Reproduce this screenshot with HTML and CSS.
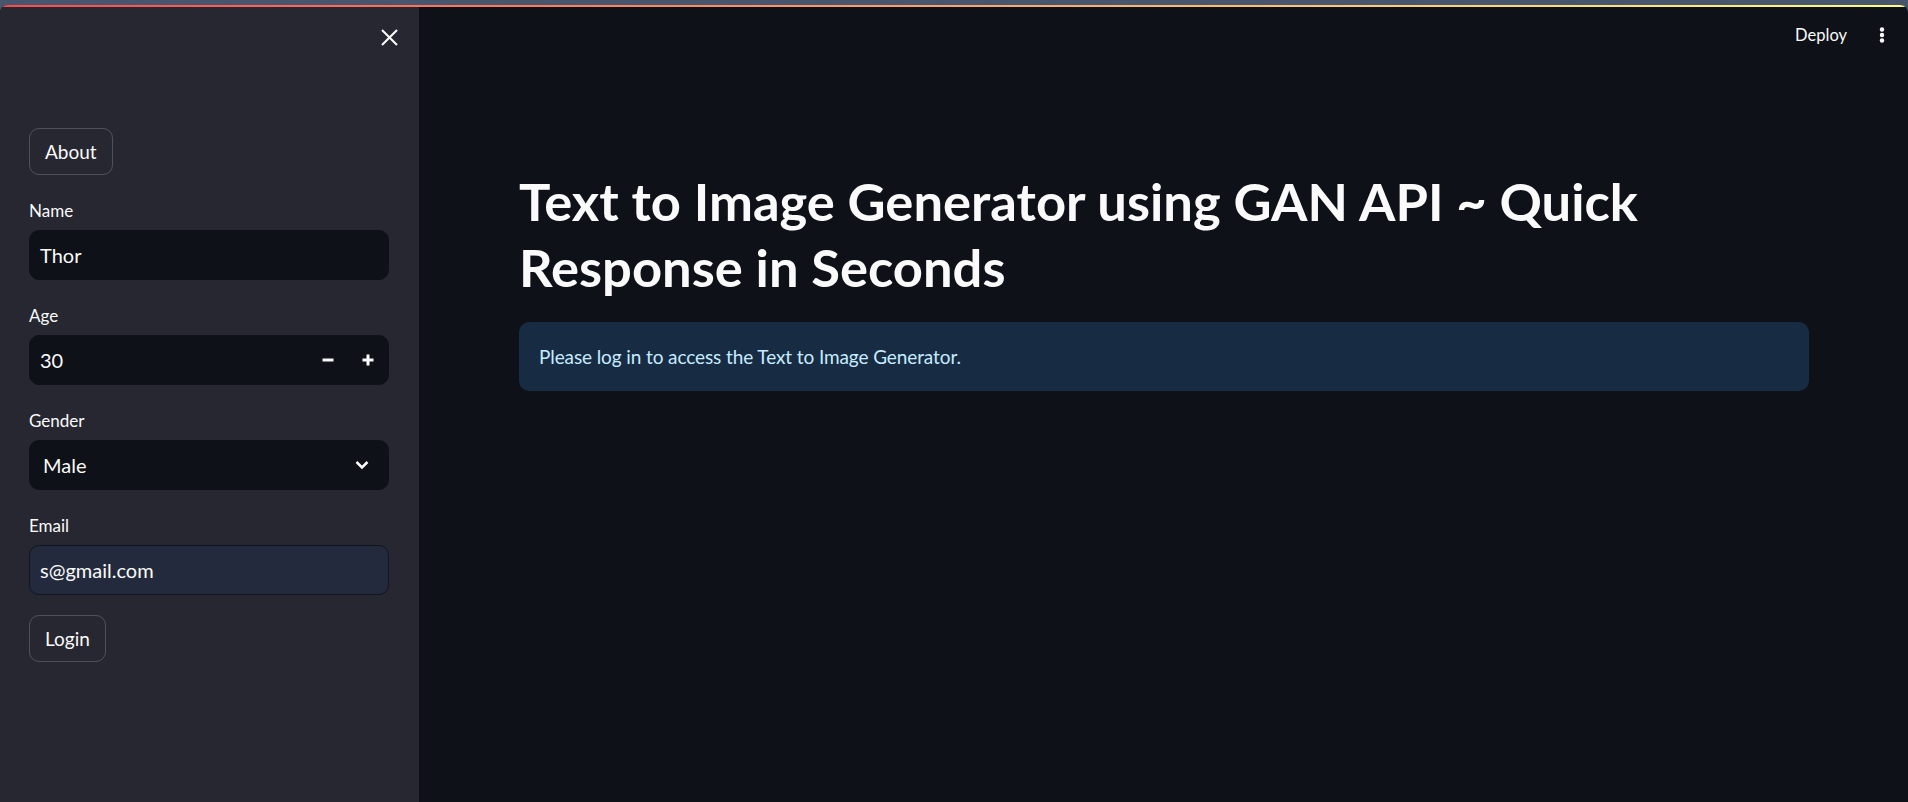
FILE: index.html
```html
<!DOCTYPE html>
<html lang="en">
<head>
<meta charset="utf-8">
<title>Text to Image Generator</title>
<link rel="stylesheet" href="styles.css">
</head>
<body>
<div class="app">
  <div class="decoration"></div>
  <div class="layout">
    <aside class="sidebar">
      <div class="sidebar-header">
        <button class="icon-btn" aria-label="Close sidebar">
          <svg width="25" height="25" viewBox="0 0 24 24"><path d="M5.5 5.5 L18.5 18.5 M18.5 5.5 L5.5 18.5" stroke="#fafafa" stroke-width="2" fill="none" stroke-linecap="square"/></svg>
        </button>
      </div>
      <div class="sidebar-content">
        <button class="btn">About</button>
        <div class="field">
          <div class="label">Name</div>
          <div class="input"><span>Thor</span></div>
        </div>
        <div class="field">
          <div class="label">Age</div>
          <div class="input number">
            <span class="grow">30</span>
            <span class="step"><svg width="12" height="12" viewBox="0 0 12 12"><rect x="0.5" y="4.5" width="11" height="3" fill="#fafafa"/></svg></span>
            <span class="step"><svg width="12" height="12" viewBox="0 0 12 12"><rect x="0.5" y="4.5" width="11" height="3" fill="#fafafa"/><rect x="4.5" y="0.5" width="3" height="11" fill="#fafafa"/></svg></span>
          </div>
        </div>
        <div class="field">
          <div class="label">Gender</div>
          <div class="input select">
            <span class="grow">Male</span>
            <svg width="14" height="10" viewBox="0 0 14 10"><path d="M1.5 2 L7 7.5 L12.5 2" stroke="#fafafa" stroke-width="2.5" fill="none"/></svg>
          </div>
        </div>
        <div class="field">
          <div class="label">Email</div>
          <div class="input filled"><span>s@gmail.com</span></div>
        </div>
        <button class="btn">Login</button>
      </div>
    </aside>
    <main class="main">
      <header class="toolbar">
        <span class="deploy">Deploy</span>
        <button class="icon-btn kebab" aria-label="Main menu">
          <svg width="24" height="24" viewBox="0 0 24 24"><circle cx="12" cy="6.5" r="2.2" fill="#fafafa"/><circle cx="12" cy="12" r="2.2" fill="#fafafa"/><circle cx="12" cy="17.5" r="2.2" fill="#fafafa"/></svg>
        </button>
      </header>
      <section class="content">
        <h1 class="title">Text to Image Generator using GAN API ~ Quick Response in Seconds</h1>
        <div class="info">Please log in to access the Text to Image Generator.</div>
      </section>
    </main>
  </div>
</div>
</body>
</html>
```
FILE: styles.css
```css
html, body {
  margin: 0;
  height: 802px;
  overflow: hidden;
}
body {
  background: #47566e;
  font-family: Lato, "Liberation Sans", sans-serif;
  color: #fafafa;
}
.app {
  margin-top: 5px;
  height: 797px;
  border-radius: 8px 8px 0 0;
  overflow: hidden;
  display: flex;
  flex-direction: column;
  background: #0e1117;
}
.decoration {
  flex: none;
  height: 2px;
  background: linear-gradient(90deg, #ff4b4b, #fffd80);
}
.layout {
  flex: 1;
  display: flex;
}
.sidebar {
  flex: none;
  width: 419px;
  background: #262730;
  display: flex;
  flex-direction: column;
}
.sidebar-header {
  display: flex;
  justify-content: flex-end;
  padding: 18px 17px 0 0;
}
.icon-btn {
  background: none;
  border: 0;
  padding: 0;
  display: flex;
  cursor: pointer;
}
.sidebar-content {
  padding: 78px 30px 0 29px;
  display: flex;
  flex-direction: column;
  align-items: flex-start;
  gap: 20px;
}
.btn {
  height: 47px;
  padding: 0 15px;
  border: 1px solid rgba(250, 250, 250, 0.2);
  border-radius: 10px;
  background: transparent;
  color: #fafafa;
  font-family: inherit;
  font-size: 19px;
}
.field {
  align-self: stretch;
}
.label {
  height: 30px;
  margin-bottom: 5px;
  display: flex;
  align-items: center;
  font-size: 17px;
}
.input {
  height: 50px;
  box-sizing: border-box;
  border: 1px solid #0e1117;
  border-radius: 10px;
  background: #0e1117;
  padding: 0 10px;
  display: flex;
  align-items: center;
  font-size: 20px;
}
.grow {
  flex: 1;
}
.number {
  padding-right: 0;
}
.step {
  width: 40px;
  height: 100%;
  display: flex;
  align-items: center;
  justify-content: center;
}
.select {
  padding: 0 19px 0 13px;
}
.filled {
  background: #232a3d;
  border-color: #12151d;
}
.main {
  flex: 1;
  display: flex;
  flex-direction: column;
}
.toolbar {
  height: 56px;
  display: flex;
  justify-content: flex-end;
  align-items: center;
  padding-right: 14px;
  gap: 23px;
}
.deploy {
  font-size: 16.5px;
}
.content {
  padding: 0 99px 0 100px;
}
.title {
  margin: 105px 0 22px;
  font-size: 52.5px;
  font-weight: 700;
  line-height: 66px;
}
.info {
  padding: 19px 20px;
  border-radius: 10px;
  background: #172c43;
  color: #c7ebff;
  font-size: 19px;
  letter-spacing: -0.1px;
  line-height: 31px;
}
```
